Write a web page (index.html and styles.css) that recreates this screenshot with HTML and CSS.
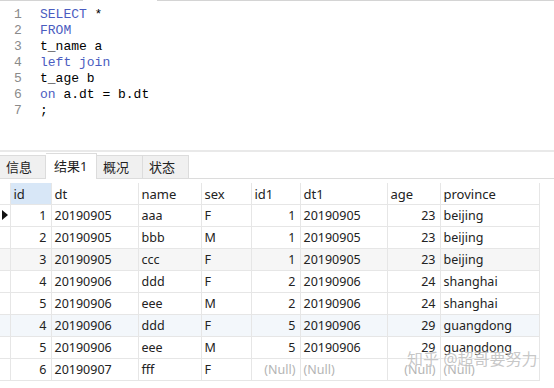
FILE: index.html
```html
<!DOCTYPE html>
<html>
<head>
  <meta charset="utf-8">
  <title>查询结果</title>
  <link rel="stylesheet" href="styles.css">
</head>
<body>
  <!-- SQL编辑区 -->
  <div class="editor">
    <div class="editor-top"><span class="edge"></span><span class="gap"></span><span class="edge wide"></span></div>
    <div class="code">
      <div class="line"><span class="num">1</span><span class="kw">SELECT</span> *</div>
      <div class="line"><span class="num">2</span><span class="kw">FROM</span></div>
      <div class="line"><span class="num">3</span>t_name a</div>
      <div class="line"><span class="num">4</span><span class="kw">left join</span></div>
      <div class="line"><span class="num">5</span>t_age b</div>
      <div class="line"><span class="num">6</span><span class="kw">on</span> a.dt = b.dt</div>
      <div class="line"><span class="num">7</span>;</div>
    </div>
  </div>
  <div class="splitter"></div>

  <!-- タブ -->
  <div class="tabs">
    <div class="tab">信息</div>
    <div class="tab active">结果1</div>
    <div class="tab">概况</div>
    <div class="tab">状态</div>
  </div>

  <!-- 結果グリッド -->
  <div class="grid-wrap">
    <table class="grid">
      <colgroup>
        <col class="c-ind"><col class="c-id"><col class="c-dt"><col class="c-name"><col class="c-sex">
        <col class="c-id1"><col class="c-dt1"><col class="c-age"><col class="c-prov">
      </colgroup>
      <thead>
        <tr>
          <th class="ind"></th>
          <th class="sel">id</th><th>dt</th><th>name</th><th>sex</th>
          <th>id1</th><th>dt1</th><th>age</th><th>province</th>
        </tr>
      </thead>
      <tbody>
        <tr>
          <td class="ind"><span class="arrow"></span></td>
          <td class="n">1</td><td>20190905</td><td>aaa</td><td>F</td>
          <td class="n">1</td><td>20190905</td><td class="n">23</td><td>beijing</td>
        </tr>
        <tr>
          <td class="ind"></td>
          <td class="n">2</td><td>20190905</td><td>bbb</td><td>M</td>
          <td class="n">1</td><td>20190905</td><td class="n">23</td><td>beijing</td>
        </tr>
        <tr class="alt">
          <td class="ind"></td>
          <td class="n">3</td><td>20190905</td><td>ccc</td><td>F</td>
          <td class="n">1</td><td>20190905</td><td class="n">23</td><td>beijing</td>
        </tr>
        <tr>
          <td class="ind"></td>
          <td class="n">4</td><td>20190906</td><td>ddd</td><td>F</td>
          <td class="n">2</td><td>20190906</td><td class="n">24</td><td>shanghai</td>
        </tr>
        <tr>
          <td class="ind"></td>
          <td class="n">5</td><td>20190906</td><td>eee</td><td>M</td>
          <td class="n">2</td><td>20190906</td><td class="n">24</td><td>shanghai</td>
        </tr>
        <tr class="hover">
          <td class="ind"></td>
          <td class="n">4</td><td>20190906</td><td>ddd</td><td>F</td>
          <td class="n">5</td><td>20190906</td><td class="n">29</td><td>guangdong</td>
        </tr>
        <tr>
          <td class="ind"></td>
          <td class="n">5</td><td>20190906</td><td>eee</td><td>M</td>
          <td class="n">5</td><td>20190906</td><td class="n">29</td><td>guangdong</td>
        </tr>
        <tr>
          <td class="ind"></td>
          <td class="n">6</td><td>20190907</td><td>fff</td><td>F</td>
          <td class="n null">(Null)</td><td class="null">(Null)</td><td class="n null">(Null)</td><td class="null">(Null)</td>
        </tr>
      </tbody>
    </table>
    <div class="watermark">知乎 @超哥要努力</div>
  </div>
</body>
</html>
```

FILE: styles.css
```css
body {
  margin: 0;
  background: #fff;
  font-family: "Noto Sans", "Noto Sans CJK SC", sans-serif;
  color: #222;
}

/* SQL编辑区 */
.editor {
  height: 150px;
  background: #fff;
}
.editor-top {
  display: flex;
  height: 1px;
}
.editor-top .edge {
  width: 83px;
  background: #d4d4d4;
}
.editor-top .gap {
  width: 74px;
}
.editor-top .wide {
  flex: 1;
}
.code {
  padding-top: 6px;
  font-family: "Liberation Mono", monospace;
  font-size: 13px;
  line-height: 16px;
  color: #000;
}
.line {
  display: flex;
  white-space: pre;
}
.num {
  width: 40px;
  padding-left: 14px;
  box-sizing: border-box;
  color: #8a8a8a;
}
.kw {
  color: #4a5cc0;
}

.splitter {
  height: 2px;
  background: #e9e9e9;
}

/* タブ */
.tabs {
  display: flex;
  align-items: flex-end;
  height: 26px;
  border-bottom: 1px solid #dcdcdc;
  font-size: 13px;
}
.tab {
  width: 46px;
  height: 23px;
  box-sizing: border-box;
  padding-left: 6px;
  line-height: 22px;
  background: #f0f0f0;
  border: 1px solid #dcdcdc;
  border-bottom: none;
  border-left: none;
  color: #222;
}
.tab.active {
  width: 51px;
  height: 26px;
  padding-left: 8px;
  line-height: 24px;
  background: #fff;
  margin-bottom: -1px;
}

/* 結果グリッド */
.grid-wrap {
  position: relative;
  padding-top: 4px;
}
.grid {
  border-collapse: collapse;
  table-layout: fixed;
  width: 539px;
  font-size: 12.5px;
}
.c-ind { width: 10px; }
.c-id { width: 41px; }
.c-dt { width: 87px; }
.c-name { width: 63px; }
.c-sex { width: 50px; }
.c-id1 { width: 49px; }
.c-dt1 { width: 87px; }
.c-age { width: 53px; }
.c-prov { width: 99px; }

.grid th, .grid td {
  height: 21px;
  padding: 0 3px;
  text-align: left;
  font-weight: normal;
  white-space: nowrap;
  overflow: hidden;
  border-right: 1px solid #e6e6e6;
  border-bottom: 1px solid #e6e6e6;
}
.grid th {
  color: #222;
  font-size: 13px;
}
.grid th.sel {
  background: #d8e7f7;
}
.grid .ind {
  padding: 0;
  position: relative;
}
.grid td.n {
  text-align: right;
  padding-right: 4px;
}
.grid td.null {
  color: #b4b4b4;
}
.grid tr.alt td {
  background: #f6f6f6;
}
.grid tr.hover td {
  background: #f3f7fb;
}
.arrow {
  position: absolute;
  left: 2px;
  top: 5px;
  width: 0;
  height: 0;
  border-top: 5px solid transparent;
  border-bottom: 5px solid transparent;
  border-left: 6px solid #111;
}

/* 透かし文字 */
.watermark {
  position: absolute;
  left: 407px;
  top: 167px;
  font-size: 16px;
  color: rgba(175, 175, 175, 0.7);
  text-shadow: 0 0 2px rgba(255, 255, 255, 0.9);
  white-space: nowrap;
}
```
